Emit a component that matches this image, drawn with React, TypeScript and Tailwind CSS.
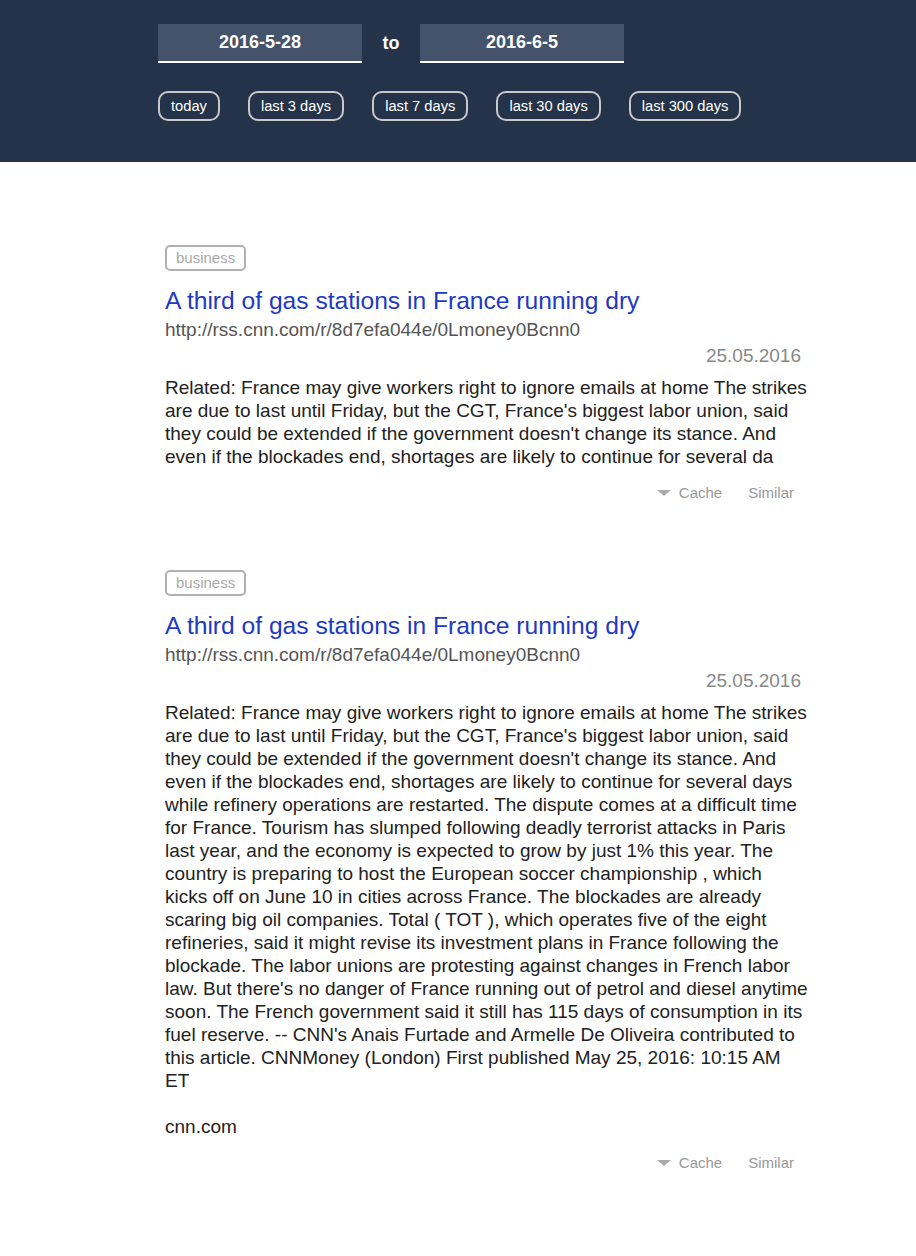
const ranges = ["today", "last 3 days", "last 7 days", "last 30 days", "last 300 days"];

const fullText =
  "Related: France may give workers right to ignore emails at home The strikes are due to last until Friday, but the CGT, France's biggest labor union, said they could be extended if the government doesn't change its stance. And even if the blockades end, shortages are likely to continue for several days while refinery operations are restarted. The dispute comes at a difficult time for France. Tourism has slumped following deadly terrorist attacks in Paris last year, and the economy is expected to grow by just 1% this year. The country is preparing to host the European soccer championship , which kicks off on June 10 in cities across France. The blockades are already scaring big oil companies. Total ( TOT ), which operates five of the eight refineries, said it might revise its investment plans in France following the blockade. The labor unions are protesting against changes in French labor law. But there's no danger of France running out of petrol and diesel anytime soon. The French government said it still has 115 days of consumption in its fuel reserve. -- CNN's Anais Furtade and Armelle De Oliveira contributed to this article. CNNMoney (London) First published May 25, 2016: 10:15 AM ET";

const shortText =
  "Related: France may give workers right to ignore emails at home The strikes are due to last until Friday, but the CGT, France's biggest labor union, said they could be extended if the government doesn't change its stance. And even if the blockades end, shortages are likely to continue for several da";

function Header() {
  return (
    <div className="bg-[#243349] pt-6 pb-[41px] pl-[158px]">
      <div className="flex items-center">
        <div className="w-[204px] h-[39px] bg-[#44536a] border-b-2 border-white flex items-center justify-center text-white text-[18px] font-bold">
          2016-5-28
        </div>
        <span className="w-[58px] text-center text-white text-[18px] font-bold">to</span>
        <div className="w-[204px] h-[39px] bg-[#44536a] border-b-2 border-white flex items-center justify-center text-white text-[18px] font-bold">
          2016-6-5
        </div>
      </div>
      <div className="flex gap-[28px] mt-[28px]">
        {ranges.map((r) => (
          <button
            key={r}
            className="h-[30px] px-[11px] rounded-[10px] border-2 border-[#c8c8c8] text-white text-[14.7px] leading-none"
          >
            {r}
          </button>
        ))}
      </div>
    </div>
  );
}

function Article({ text, source }: { text: string; source?: string }) {
  return (
    <div className="w-[643px]">
      <span className="inline-block h-[26px] px-[9px] border-2 border-[#b0b0b0] rounded-[5px] text-[15px] leading-[22px] text-[#aaaaaa]">
        business
      </span>
      <h2 className="mt-[16px] text-[24.6px] leading-[28px] text-[#1e39c2]">
        A third of gas stations in France running dry
      </h2>
      <div className="text-[19px] leading-[20px] text-[#555555] mt-[5px]">
        http://rss.cnn.com/r/8d7efa044e/0Lmoney0Bcnn0
      </div>
      <div className="text-right pr-[7px] text-[19px] leading-[22px] text-[#888888] mt-[5px]">25.05.2016</div>
      <p className="mt-[9px] text-[19px] leading-[23px] text-[#222222]">{text}</p>
      {source && <p className="mt-[23px] text-[19px] leading-[23px] text-[#222222]">{source}</p>}
      <div className="flex justify-end items-center pr-[14px] mt-[16px] text-[15px] leading-[18px] text-[#999999]">
        <svg width="14" height="6" viewBox="0 0 14 6" className="mr-[8px]">
          <polygon points="0,0 14,0 7,6" fill="#aaaaaa" />
        </svg>
        <span>Cache</span>
        <span className="ml-[26px]">Similar</span>
      </div>
    </div>
  );
}

export default function App() {
  return (
    <div className="min-h-[1256px] bg-white font-['Liberation_Sans',Arial,sans-serif]">
      <Header />
      <div className="pl-[165px] pt-[83px] flex flex-col gap-[68px]">
        <Article text={shortText} />
        <Article text={fullText} source="cnn.com" />
      </div>
    </div>
  );
}
